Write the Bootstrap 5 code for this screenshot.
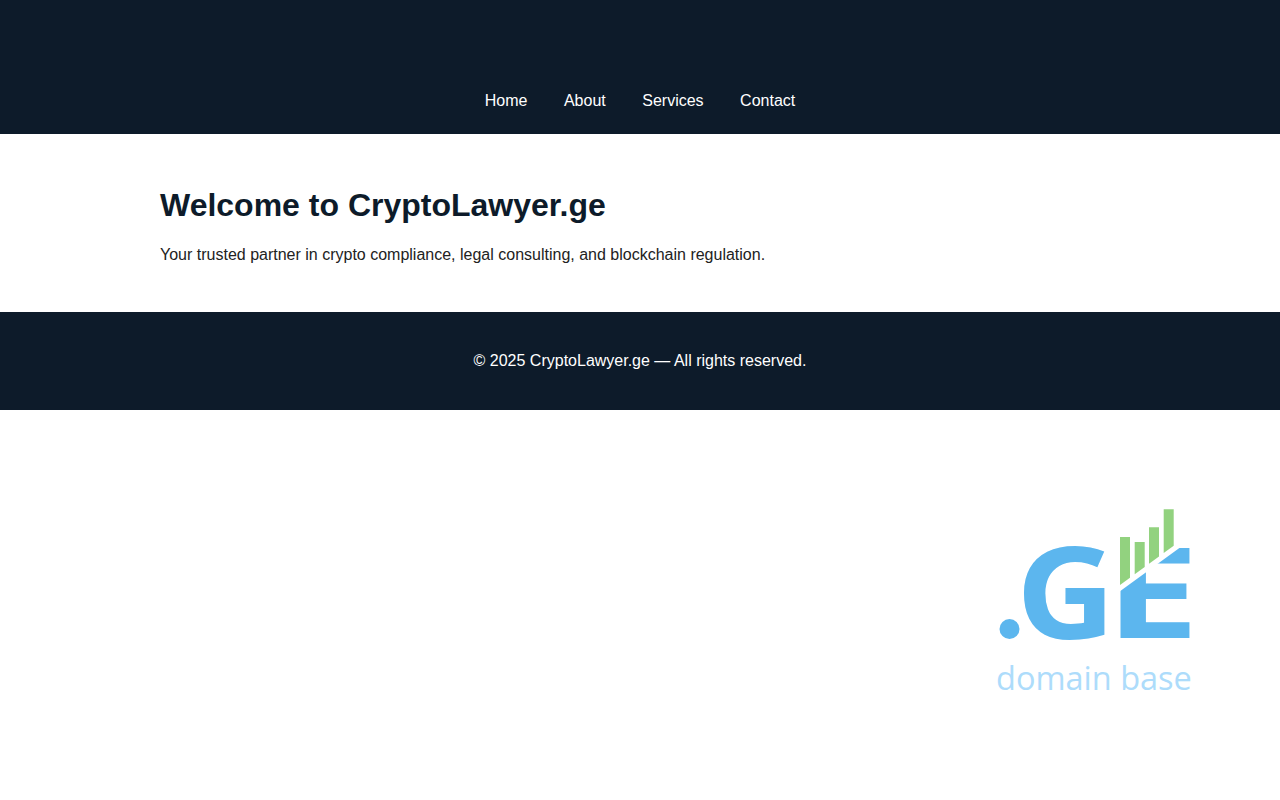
<!DOCTYPE html>
<html lang="en">
<head>
  <meta charset="UTF-8">
  <title>CryptoLawyer.ge</title>
  <meta name="viewport" content="width=device-width, initial-scale=1">
  <link href="https://cdn.jsdelivr.net/npm/bootstrap@5.3.3/dist/css/bootstrap.min.css" rel="stylesheet">
  <style>
    body { font-family: "Liberation Sans", Arial, sans-serif; font-size: 16px; color: #222; line-height: 1.5; }
    .site-head { background: #0d1b2a; height: 134px; padding-top: 89px; }
    .site-head ul { gap: 36.5px; }
    .site-head a { color: #fff; text-decoration: none; display: block; line-height: 24px; }
    .site-main { height: 178px; padding: 48px 160px 0; }
    .site-main h1 { font-size: 32px; font-weight: 700; color: #0d1b2a; line-height: 42px; margin: 2px 0 17px; }
    .site-main p { margin: 0; line-height: 24px; }
    .site-foot { background: #0d1b2a; color: #fff; height: 98px; line-height: 98px; }
    .logo-wrap { padding: 90px 80px 0 0; }
    .logo-g { font-family: "Open Sans", sans-serif; font-weight: 700; font-size: 127px; fill: #5cb6ee; }
    .logo-e { font-family: "Open Sans", sans-serif; font-weight: 700; font-size: 126px; fill: #5cb6ee; }
    .logo-sub { font-family: "Open Sans", sans-serif; font-size: 32.5px; fill: #addcfb; }
  </style>
</head>
<body>
  <!-- Header -->
  <header class="site-head">
    <nav>
      <ul class="list-unstyled d-flex justify-content-center m-0">
        <li><a href="#">Home</a></li>
        <li><a href="#">About</a></li>
        <li><a href="#">Services</a></li>
        <li><a href="#">Contact</a></li>
      </ul>
    </nav>
  </header>

  <main class="site-main">
    <h1>Welcome to CryptoLawyer.ge</h1>
    <p>Your trusted partner in crypto compliance, legal consulting, and blockchain regulation.</p>
  </main>

  <footer class="site-foot text-center">© 2025 CryptoLawyer.ge — All rights reserved.</footer>

  <!-- Logo -->
  <div class="logo-wrap d-flex justify-content-end">
    <svg width="210" height="200" viewBox="990 500 210 200" role="img" aria-label=".GE domain base">
      <defs>
        <clipPath id="cut-e"><polygon points="1110,598.6 1200,532.9 1200,650 1110,650"/></clipPath>
      </defs>
      <circle cx="1009.500" cy="629" r="10" fill="#5cb6ee"/>
      <text class="logo-g" transform="translate(1016 638.5) scale(1.08 1)">G</text>
      <g clip-path="url(#cut-e)">
        <text class="logo-e" transform="translate(1105.4 638) scale(1.33 1)">E</text>
      </g>
      <g fill="#92d27f">
        <polygon points="1120,537 1130,537 1130,577.7 1120,585"/>
        <polygon points="1134.700,542 1144.700,542 1144.700,567 1134.700,574.300"/>
        <polygon points="1149,527.300 1159,527.300 1159,556.500 1149,563.800"/>
        <polygon points="1163.700,509.300 1173.700,509.300 1173.700,545.700 1163.700,553"/>
      </g>
      <text class="logo-sub" x="996" y="690">domain base</text>
    </svg>
  </div>
</body>
</html>
